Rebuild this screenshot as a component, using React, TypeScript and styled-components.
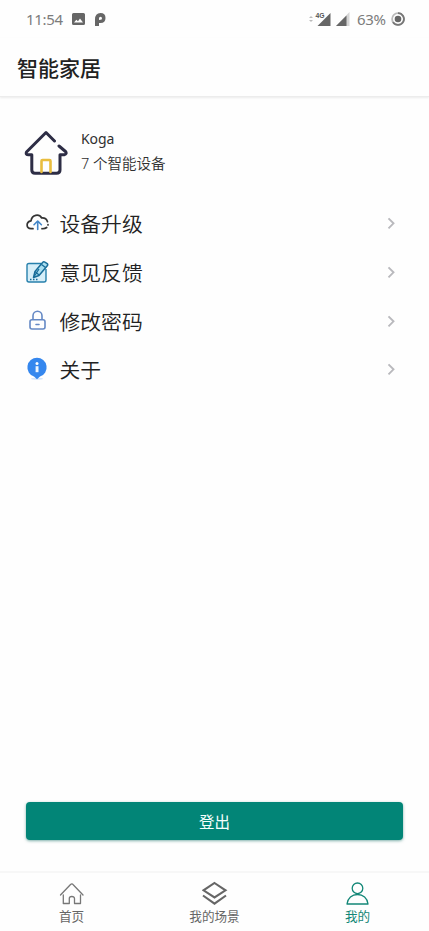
import React from "react";
import styled, { createGlobalStyle } from "styled-components";

const GlobalStyle = createGlobalStyle`
  * { box-sizing: border-box; }
  html, body { margin: 0; padding: 0; background: #fefefe; }
  body { font-family: "Noto Sans", "Noto Sans CJK SC", sans-serif; color: #333; overflow: hidden; }
  svg { display: block; flex: none; }
`;

const Screen = styled.div`
  display: flex;
  flex-direction: column;
  width: 429px;
  height: 931px;
  background: #fefefe;
`;

const StatusBar = styled.header`
  display: flex;
  justify-content: space-between;
  align-items: center;
  height: 38px;
  padding: 0 24px 0 26px;
  font-size: 15px;
  line-height: 20px;
  color: #7c7c7c;
`;

const StatusGroup = styled.div<{ $gap: number }>`
  display: flex;
  align-items: center;
  gap: ${(p) => p.$gap}px;
`;

const StatusText = styled.span<{ $width: number }>`
  width: ${(p) => p.$width}px;
  white-space: nowrap;
  letter-spacing: -0.3px;
`;

const TitleBar = styled.div`
  display: flex;
  align-items: center;
  height: 59px;
  padding: 0 17px;
  border-bottom: 1px solid #ececec;
  box-shadow: 0 1px 2px rgba(0, 0, 0, 0.08);
`;

const Title = styled.h1`
  margin: 0;
  font: 500 21px/30px "Noto Sans CJK SC", sans-serif;
  color: #222;
`;

const Profile = styled.section`
  display: flex;
  align-items: center;
  gap: 13px;
  height: 50px;
  margin: 30px 0 22px 24px;
`;

const ProfileText = styled.div`
  display: flex;
  flex-direction: column;
  margin-top: -2px;
  line-height: 25px;
  color: #303030;
`;

const UserName = styled.span`
  font-size: 14px;
  letter-spacing: -0.1px;
`;

const DeviceCount = styled.span`
  font: 350 14.5px/25px "Noto Sans", "Noto Sans CJK SC", sans-serif;
`;

const Menu = styled.nav`
  display: flex;
  flex-direction: column;
`;

const MenuRow = styled.a`
  display: flex;
  align-items: center;
  height: 48.7px;
  padding: 0 30px 0 25px;
`;

const MenuLabel = styled.span`
  flex: 1;
  margin-left: 10.5px;
  font: 350 20.8px/30px "Noto Sans CJK SC", sans-serif;
  color: #222;
`;

const LogoutButton = styled.button`
  height: 38px;
  margin: auto 26px 31px;
  padding: 0 0 1px;
  border: 0;
  border-radius: 4px;
  background: #028577;
  box-shadow: 0 1px 3px rgba(2, 100, 90, 0.5);
  color: #f4fffd;
  font: 400 15.5px/22px "Noto Sans CJK SC", sans-serif;
`;

const TabBar = styled.nav`
  display: grid;
  grid-template-columns: repeat(3, 1fr);
  height: 60px;
  border-top: 2px solid #f7f7f7;
`;

const Tab = styled.a<{ $active?: boolean }>`
  display: flex;
  flex-direction: column;
  align-items: center;
  padding-top: 8px;
  font: 400 12.6px/18px "Noto Sans CJK SC", sans-serif;
  color: ${(p) => (p.$active ? "#138777" : "#666")};
`;

const PhotoIcon = () => (
  <svg width="13" height="12" viewBox="0 0 13 12">
    <path fillRule="evenodd" fill="#666" d="M1.500 0h10Q13 0 13 1.500v9Q13 12 11.500 12h-10Q0 12 0 10.500v-9Q0 0 1.500 0ZM2 9.500h9L8 5.600 6 8.200 4.300 6.700Z" />
  </svg>
);

const ParkingIcon = () => (
  <svg width="11" height="13" viewBox="0 0 11 13">
    <path d="M0 6.500Q0 0 5.500 0 10.500 0 10.500 5T5.500 10H4V13H0ZM4 7V5.300Q4 3.700 5.500 3.700T7 5.200 5.500 6.700Z" fill="#666" fillRule="evenodd" />
  </svg>
);

const MobileSignal = () => (
  <svg width="22" height="16" viewBox="0 0 22 16">
    <path d="M0 7l2-2 2 2ZM0 9l2 2 2-2Z" fill="#bbb" />
    <path d="M21.500 2v13H8.500Z" fill="#666" />
    <text x="6.500" y="7" fontFamily="Liberation Sans" fontSize="6.800" fontWeight="700" fill="#555" stroke="#fefefe" strokeWidth="1.500" paintOrder="stroke">4G</text>
  </svg>
);

const SecondSignal = () => (
  <svg width="16" height="14" viewBox="0 0 16 14">
    <path d="M13.500 0v14H0Z" fill="#d5d5d5" />
    <path d="M10.500 3.500V14H0Z" fill="#666" />
  </svg>
);

const BatteryRing = () => (
  <svg width="14" height="14" viewBox="0 0 14 14" fill="none">
    <circle cx="7" cy="7" r="5.900" stroke="#bbb" strokeWidth="1.800" />
    <path d="M7 1.100A5.900 5.900 0 1 1 2 10.100" stroke="#777" strokeWidth="1.800" />
    <circle cx="7" cy="7" r="3.300" fill="#666" />
  </svg>
);

const HouseLogo = () => (
  <svg width="44" height="46" viewBox="0 0 44 46" fill="none" strokeLinecap="round" strokeLinejoin="round">
    <path d="M30.500 12 22 3.500 2.500 23Q1.400 25.800 4.500 25.800H7.800V41Q7.800 44.300 11 44.300H32.500Q36 44.300 36 41V25.800H40.200Q43.300 25 41.500 22.500L35 17" stroke="#2d2d45" strokeWidth="3" />
    <path d="M17.500 43V32Q17.500 31 18.500 31H25.500Q26.500 31 26.500 32V43" stroke="#e9bd3e" strokeWidth="2.600" />
  </svg>
);

const CloudUploadIcon = () => (
  <svg width="24" height="24" viewBox="0 0 24 24" fill="none" strokeLinecap="round" strokeLinejoin="round">
    <path d="M8 17.700H6C1 17.700.6 10.700 6 9.800 7 3.600 14 2.500 16.700 7 19.500 6.800 21.700 8.200 22.500 10.700M23 13.700v.2M21.700 16.500Q20 17.900 17 17.700" stroke="#333" strokeWidth="1.700" />
    <path d="M12.700 18.500v-8M9 13.700l3.700-3.700 3.700 3.700" stroke="#4386c8" strokeWidth="1.600" />
  </svg>
);

const FeedbackIcon = () => (
  <svg width="24" height="24" viewBox="0 0 24 24" fill="none" strokeLinejoin="round">
    <path d="M16 3.500H4Q2 3.500 2 5.500V20Q2 22 4 22H19Q21 22 21 20V9" fill="#d6eef8" stroke="#2780ac" strokeWidth="1.400" />
    <path d="m8.500 17.500 1.500-6L17.800 2.300Q18.700 1.400 19.900 2.200L22.200 3.600Q23.200 4.600 22.300 5.700L14 15.500Z" fill="#a9def0" stroke="#196d99" strokeWidth="1.500" />
    <path d="m16.500 4.500 4 3M10 11.500l4 3.500M8.500 17.500l5.500-8.500" stroke="#196d99" strokeWidth="1.300" />
    <path d="M5 19.500h1.500M8 19.500h1.500M11 19.500h1.500" stroke="#196d99" strokeWidth="1.300" />
  </svg>
);

const LockIcon = () => (
  <svg width="24" height="24" viewBox="0 0 24 24" fill="none" stroke="#6589c5" strokeWidth="1.600" strokeLinecap="round">
    <rect x="5" y="10.700" width="15" height="9.300" rx="2" />
    <path d="M8 10V6.800a4.500 4.500 0 0 1 9 0V10M11 15.500h3" />
  </svg>
);

const AboutIcon = () => (
  <svg width="24" height="24" viewBox="0 0 24 24">
    <ellipse cx="12" cy="21.800" rx="6" ry="1" fill="#d4e5fb" />
    <path d="M12 .7A9.700 9.700 0 0 1 15 19.600L12 22.200 9 19.600A9.700 9.700 0 0 1 12 .7Z" fill="#3587ee" />
    <circle cx="12" cy="6.500" r="1.500" fill="#fff" />
    <path d="M10.600 9.200h2.900v6h-2.900Z" fill="#eef6ff" />
  </svg>
);

const ChevronIcon = () => (
  <svg width="14" height="14" viewBox="0 0 14 14" fill="none">
    <path d="m3.500 2.300 5 5-5 5" stroke="#b9b9bd" strokeWidth="1.900" />
  </svg>
);

const HomeTabIcon = () => (
  <svg width="26" height="26" viewBox="0 0 26 26" fill="none" stroke="#777" strokeWidth="1.300" strokeLinejoin="round" strokeLinecap="round">
    <path d="M1.500 14 11.300 3.700Q13 2.200 14.200 3.700L24 14M4.300 14V22.500H10.300V17.500Q10.300 15.500 12.800 15.500T15.500 17.500V22.500H21.500V14" />
  </svg>
);

const LayersIcon = () => (
  <svg width="26" height="26" viewBox="0 0 26 26" fill="none" stroke="currentColor" strokeWidth="2.100">
    <path d="M12.500 2 23.500 9.300 12.500 16.500 1.500 9.300Z M1 14.500 12.500 22.700 24 14.500" />
  </svg>
);

const PersonIcon = () => (
  <svg width="26" height="26" viewBox="0 0 26 26" fill="none" stroke="currentColor" strokeWidth="1.300" strokeLinejoin="round">
    <circle cx="12.500" cy="7.300" r="5.300" />
    <path d="M2 23C2.700 17 7 13.500 12.500 13.500S22.400 17 23 23Z" />
  </svg>
);

const menuItems = [
  { label: "设备升级", icon: <CloudUploadIcon /> },
  { label: "意见反馈", icon: <FeedbackIcon /> },
  { label: "修改密码", icon: <LockIcon /> },
  { label: "关于", icon: <AboutIcon /> },
];

const tabs = [
  { label: "首页", icon: <HomeTabIcon /> },
  { label: "我的场景", icon: <LayersIcon /> },
  { label: "我的", icon: <PersonIcon />, active: true },
];

export default function App() {
  return (
    <>
      <GlobalStyle />
      <Screen>
        <StatusBar>
          <StatusGroup $gap={10}>
            <StatusText $width={36}>11:54</StatusText>
            <PhotoIcon />
            <ParkingIcon />
          </StatusGroup>
          <StatusGroup $gap={5}>
            <MobileSignal />
            <SecondSignal />
            <StatusText $width={29}>63%</StatusText>
            <BatteryRing />
          </StatusGroup>
        </StatusBar>
        <TitleBar>
          <Title>智能家居</Title>
        </TitleBar>
        <Profile>
          <HouseLogo />
          <ProfileText>
            <UserName>Koga</UserName>
            <DeviceCount>7 个智能设备</DeviceCount>
          </ProfileText>
        </Profile>
        <Menu>
          {menuItems.map((item) => (
            <MenuRow key={item.label}>
              {item.icon}
              <MenuLabel>{item.label}</MenuLabel>
              <ChevronIcon />
            </MenuRow>
          ))}
        </Menu>
        <LogoutButton>登出</LogoutButton>
        <TabBar>
          {tabs.map((tab) => (
            <Tab key={tab.label} $active={tab.active}>
              {tab.icon}
              <span>{tab.label}</span>
            </Tab>
          ))}
        </TabBar>
      </Screen>
    </>
  );
}
